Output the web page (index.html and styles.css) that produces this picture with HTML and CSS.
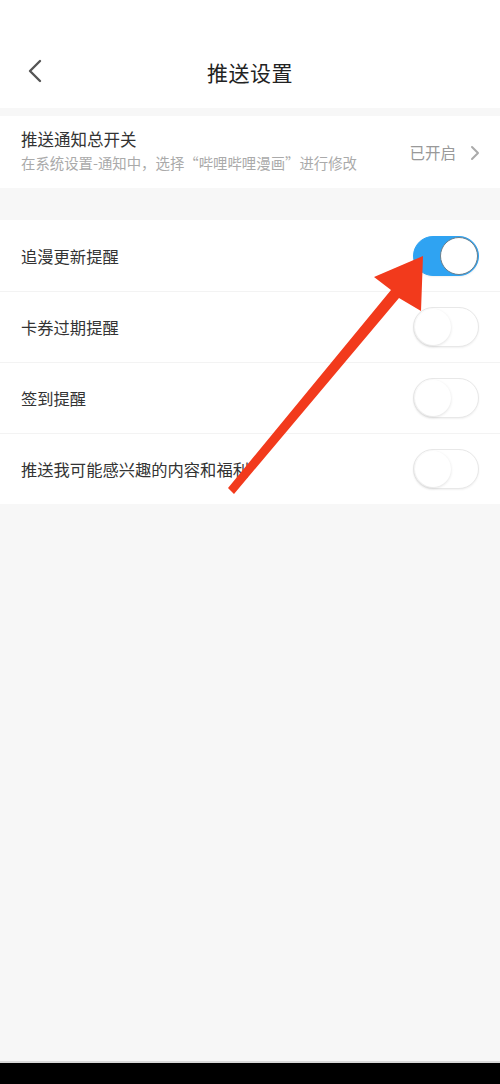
FILE: index.html
```html
<!DOCTYPE html>
<html lang="zh">
<head>
<meta charset="utf-8">
<link rel="stylesheet" href="styles.css">
</head>
<body>
<div class="page">
  <header class="header">
    <svg class="back" width="16" height="24" viewBox="0 0 16 24"><path d="M13 2 L3 12 L13 22" fill="none" stroke="#555" stroke-width="2.4" stroke-linecap="round" stroke-linejoin="round"/></svg>
    <div class="title">推送设置</div>
  </header>
  <section class="card master">
    <div class="master-text">
      <div class="label">推送通知总开关</div>
      <div class="sub">在系统设置-通知中，选择“哔哩哔哩漫画”进行修改</div>
    </div>
    <div class="status">已开启</div>
    <svg class="chev" width="10" height="16" viewBox="0 0 10 16"><path d="M2 2 L8 8 L2 14" fill="none" stroke="#aaa" stroke-width="2" stroke-linecap="round" stroke-linejoin="round"/></svg>
  </section>
  <section class="card list">
    <div class="row"><span class="label">追漫更新提醒</span><span class="toggle on"><span class="knob"></span></span></div>
    <div class="row"><span class="label">卡券过期提醒</span><span class="toggle"><span class="knob"></span></span></div>
    <div class="row"><span class="label">签到提醒</span><span class="toggle"><span class="knob"></span></span></div>
    <div class="row"><span class="label">推送我可能感兴趣的内容和福利</span><span class="toggle"><span class="knob"></span></span></div>
  </section>
  <div class="spacer"></div>
  <div class="navbar"></div>
  <svg class="arrow" width="500" height="1084" viewBox="0 0 500 1084">
    <polygon points="423,256 374,277 391,290 228,488 234,494 399,298 421,311" fill="#f23a1c"/>
  </svg>
</div>
</body>
</html>
```
FILE: styles.css
```css
* { box-sizing: border-box; }
html, body { margin: 0; padding: 0; }
body {
  background: #f7f7f7;
  font-family: "Noto Sans CJK SC", "Noto Sans", sans-serif;
  color: #222;
}
.page {
  position: relative;
  width: 500px;
  height: 1084px;
  display: flex;
  flex-direction: column;
}
.header {
  position: relative;
  height: 108px;
  background: #fff;
  padding-top: 36px;
  display: flex;
  align-items: center;
  justify-content: center;
  margin-bottom: 8px;
}
.back {
  position: absolute;
  left: 27px;
  top: 59px;
}
.title {
  font-size: 21px;
  color: #222;
  letter-spacing: 0.5px;
}
.card { background: #fff; }
.master {
  height: 72px;
  display: flex;
  align-items: center;
  padding: 0 20px 0 21px;
  margin-bottom: 32px;
}
.master-text { flex: 1; }
.master .label { font-size: 16.5px; color: #333; line-height: 22px; margin-top: -4px; }
.sub { font-size: 14.4px; color: #aaa; line-height: 20px; margin-top: 3px; }
.status { font-size: 15.5px; color: #999; margin-right: 14px; }
.chev { margin-top: 1px; }
.row {
  height: 71px;
  display: flex;
  align-items: center;
  justify-content: space-between;
  padding: 0 21px;
  border-top: 1px solid #f3f3f3;
}
.row:first-child { border-top: none; height: 71px; }
.row .label { font-size: 16.3px; color: #333; }
.toggle {
  position: relative;
  width: 66px;
  height: 40px;
  border-radius: 20px;
  background: #fff;
  border: 1px solid #e8e8e8;
  box-shadow: 0 1px 2px rgba(0,0,0,0.06);
}
.toggle .knob {
  position: absolute;
  left: 1px;
  top: 1px;
  width: 36px;
  height: 36px;
  border-radius: 50%;
  background: #fff;
  box-shadow: 0 1px 3px rgba(0,0,0,0.12);
}
.toggle.on {
  background: #2fa3f2;
  border-color: #2fa3f2;
}
.toggle.on .knob {
  left: auto;
  right: 0;
  top: 0;
  width: 38px;
  height: 38px;
  border: 1.5px solid #6b7f8c;
  box-shadow: none;
}
.spacer { flex: 1; }
.navbar {
  height: 23px;
  background: #000;
  border-top: 2px solid #d9d9d9;
}
.arrow {
  position: absolute;
  left: 0;
  top: 0;
  pointer-events: none;
}
```
